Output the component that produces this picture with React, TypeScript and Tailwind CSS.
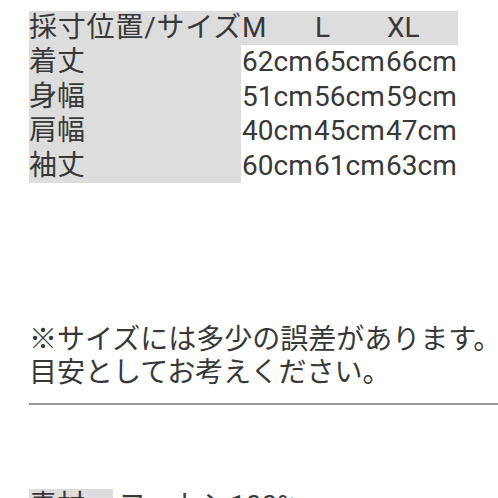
const rows = [
  { label: '着丈', values: ['62cm', '65cm', '66cm'] },
  { label: '身幅', values: ['51cm', '56cm', '59cm'] },
  { label: '肩幅', values: ['40cm', '45cm', '47cm'] },
  { label: '袖丈', values: ['60cm', '61cm', '63cm'] },
];

const App = () => {
  return (
    <div
      className="w-full h-[498px] overflow-hidden bg-white text-[#383838]"
      style={{ fontFamily: 'Roboto, "Noto Sans CJK JP", sans-serif' }}
    >
      <div className="w-[560px] pl-[29px] pt-[11px]">
        {/* size table */}
        <div className="grid grid-cols-[212px_72px_72px_73px] text-[28px] leading-[34.4px] whitespace-nowrap">
          <div className="bg-[#dddddd] tracking-[0.8px]">採寸位置/サイズ</div>
          <div className="bg-[#dddddd] pl-[1px]">M</div>
          <div className="bg-[#dddddd] pl-[2px]">L</div>
          <div className="bg-[#dddddd] pl-[2px]">XL</div>
          {rows.map((row) => (
            <div key={row.label} className="contents">
              <div className="bg-[#dddddd]">{row.label}</div>
              {row.values.map((v, i) => (
                <div key={i} className="pl-[1px]">{v}</div>
              ))}
            </div>
          ))}
        </div>

        {/* note */}
        <p className="mt-[140px] text-[28px] leading-[33px] whitespace-nowrap">
          ※サイズには多少の誤差があります。
          <br />
          目安としてお考えください。
        </p>

        <div className="mt-[14px] h-[2px] bg-[#999999]" />

        {/* material */}
        <div className="mt-[84px] flex text-[28px] leading-[34.4px] whitespace-nowrap">
          <div className="w-[84px] bg-[#dddddd]">素材</div>
          <div className="pl-[5px]">コットン100%</div>
        </div>
      </div>
    </div>
  );
};

export default App;
